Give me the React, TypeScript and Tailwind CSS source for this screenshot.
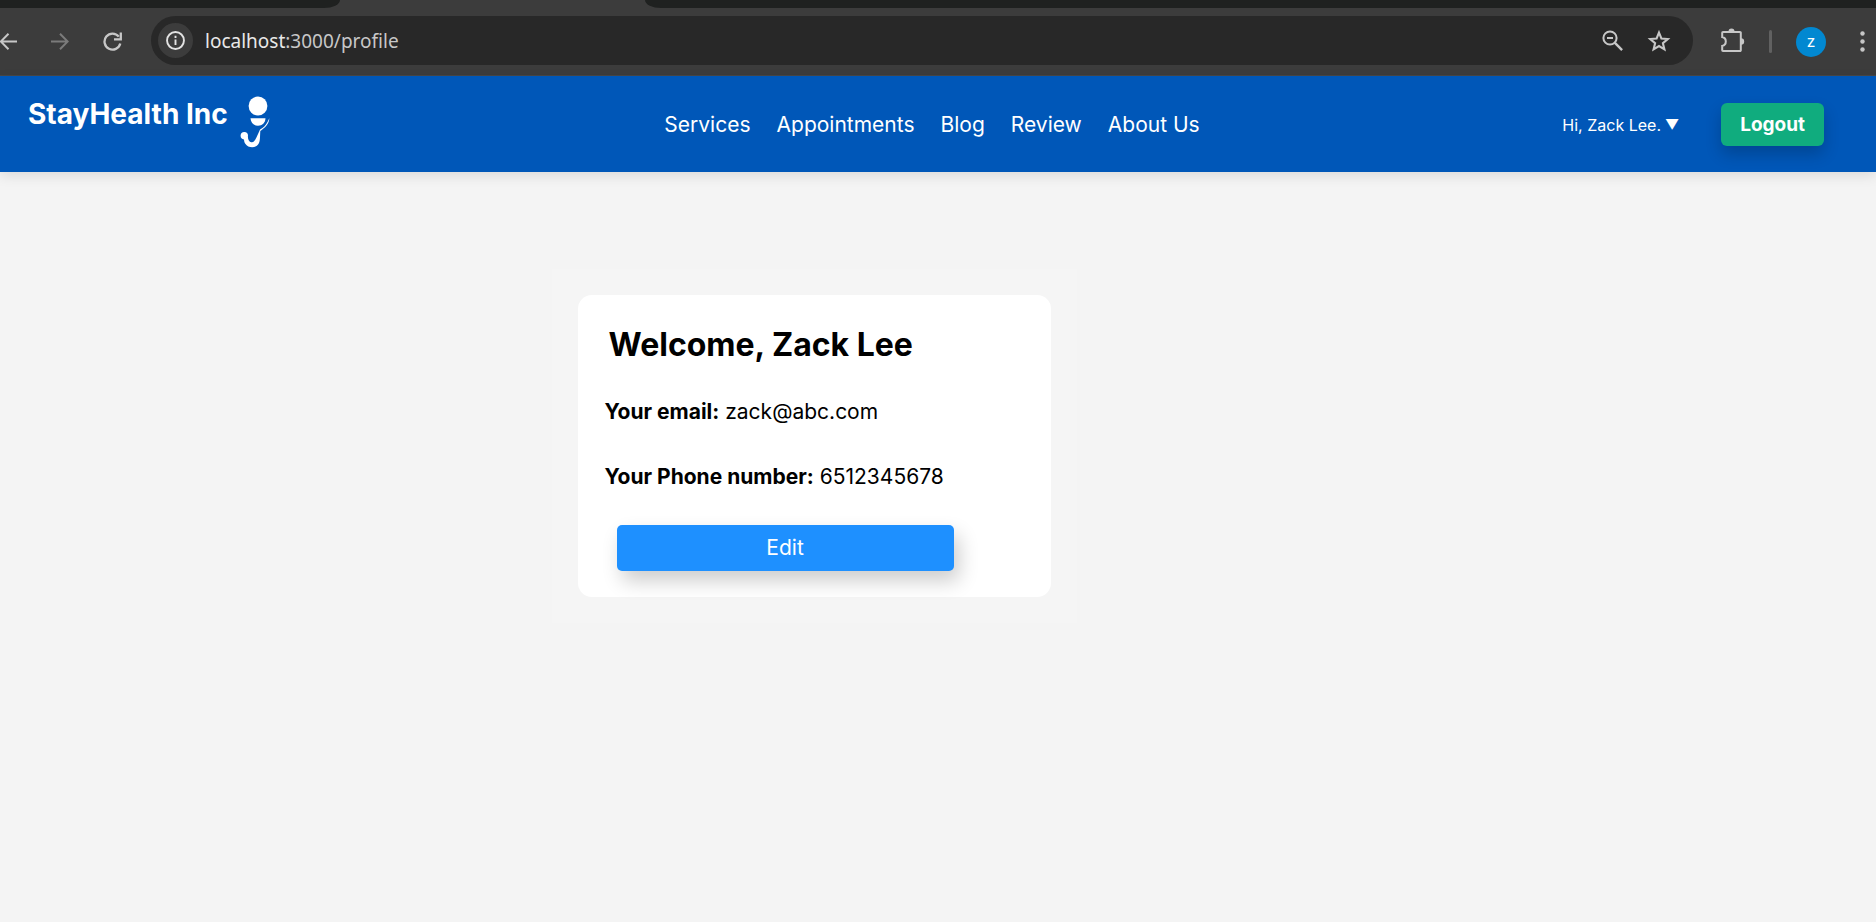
import React from "react";

const navLinks = ["Services", "Appointments", "Blog", "Review", "About Us"];

const pillButton = "flex h-[33px] w-8 shrink-0 items-center justify-center text-[#c7c7c7]";
const barButton = "mt-0.5 flex h-[33px] shrink-0 items-center";

function BrowserBar() {
  return (
    <div className="border-b border-[#474747] bg-[#3c3c3c]">
      <div className="flex h-2">
        <div className="w-[18.1%] rounded-br-[16px_8px] bg-[#1f2120]" />
        <div className="w-[16.3%]" />
        <div className="flex-1 rounded-bl-[16px_8px] bg-[#1f2120]" />
      </div>
      <div className="flex h-[67px] items-center pb-0.5">
        <button type="button" aria-label="Back" className={`${barButton} w-6 text-[#c7c7c7]`}>
          <svg width="17" height="17" viewBox="0 0 17 17" fill="none" stroke="currentColor" strokeWidth="2">
            <path d="M17 8.500H1M8.500 .8L.8 8.500l7.700 7.700" />
          </svg>
        </button>
        <button type="button" aria-label="Forward" className={`${barButton} ml-5 w-8 justify-center text-[#7b7b7b]`}>
          <svg width="18" height="17" viewBox="0 0 18 17" fill="none" stroke="currentColor" strokeWidth="2">
            <path d="M0 8.500h16.500M9 .8l7.700 7.700L9 16.200" />
          </svg>
        </button>
        <button type="button" aria-label="Reload" className={`${barButton} ml-[21px] w-8 justify-center text-[#c7c7c7]`}>
          <svg width="20" height="19" viewBox="0 0 20 19" fill="none" stroke="currentColor" strokeWidth="2.3">
            <path d="M17.300 11.500A8 8 0 1 1 15.800 4.600" />
            <path d="M17.800 .5v6.800H11" />
          </svg>
        </button>
        <div className="ml-[22px] flex h-[49px] flex-1 items-center rounded-full bg-[#282828] pl-[7px] pr-[18px]">
          <button
            type="button"
            aria-label="Site information"
            className="flex h-[35px] w-[35px] shrink-0 items-center justify-center rounded-full bg-[#3c3c3c] text-[#e3e3e3]"
          >
            <svg width="19" height="19" viewBox="0 0 20 20" fill="none" stroke="currentColor" strokeWidth="2">
              <circle cx="10" cy="10" r="8.900" />
              <path d="M10 9v5.800M10 5v2.300" />
            </svg>
          </button>
          <a href="#profile" className="ml-3 flex-1 font-['Noto_Sans',sans-serif] text-[19px] leading-7 text-[#c7c7c7]">
            <span className="text-[#e8e8e8]">localhost</span>:3000/profile
          </a>
          <button type="button" aria-label="Zoom" className={pillButton}>
            <svg width="21" height="21" viewBox="0 0 21 21" fill="none" stroke="currentColor" strokeWidth="2">
              <circle cx="8" cy="8" r="6.600" />
              <path d="M12.700 12.700l7.400 7.400" strokeWidth="2.400" />
              <path d="M5 8h6" />
            </svg>
          </button>
          <button type="button" aria-label="Bookmark this page" className={`${pillButton} ml-[15px]`}>
            <svg width="24" height="24" viewBox="0 0 24 24" fill="none" stroke="currentColor" strokeWidth="2.100">
              <path d="M12 3.600l2.400 5.900 6.400.5-4.900 4.200 1.500 6.200L12 17.100l-5.400 3.300 1.500-6.200L3.200 10l6.400-.5z" />
            </svg>
          </button>
        </div>
        <button type="button" aria-label="Extensions" className="ml-[23px] flex h-[33px] w-8 shrink-0 items-center justify-center text-[#c7c7c7]">
          <svg width="26" height="25" viewBox="0 0 26 25">
            <path
              d="M4 4h17a.8.8 0 0 1 .8.8v17.400a.8.8 0 0 1-.8.8H4a.8.8 0 0 1-.8-.8v-4.300c4.800-1 4.800-7.800 0-8.800V4.800A.8.8 0 0 1 4 4z"
              fill="none"
              stroke="currentColor"
              strokeWidth="2"
            />
            <path d="M9.500 3.500a3 3 0 0 1 6 0zM22 10.300a3.200 3.200 0 0 1 0 6.400z" fill="currentColor" />
          </svg>
        </button>
        <div className="ml-[21px] mt-0.5 h-[23px] w-[3px] shrink-0 rounded-full bg-[#616161]" />
        <button
          type="button"
          aria-label="Account"
          className="ml-6 mt-[3px] flex h-[30px] w-[30px] shrink-0 items-center justify-center rounded-full bg-[#0288d1] font-['Roboto',sans-serif] text-[16px] leading-5 text-white"
        >
          z
        </button>
        <button type="button" aria-label="Menu" className={`${barButton} ml-[23px] w-[27px] justify-center text-[#c7c7c7]`}>
          <svg width="5" height="21" viewBox="0 0 5 21" fill="currentColor">
            <circle cx="2.500" cy="2.500" r="2.200" />
            <circle cx="2.500" cy="10.500" r="2.200" />
            <circle cx="2.500" cy="18.500" r="2.200" />
          </svg>
        </button>
      </div>
    </div>
  );
}

function Logo() {
  return (
    <svg width="30" height="52" viewBox="0 0 30 52" fill="#fff" aria-hidden="true">
      <circle cx="18" cy="10" r="9.400" />
      <path d="M10.500 22.300h15c-.2 4.500-3.200 7.400-7.500 7.400s-7.300-2.900-7.500-7.400z" />
      <path d="M29.300 22.300c0 4.200-2.500 8.200-7.600 11.600l-1.400 1.200c-.4 6.500-.1 9.400-1.300 12-2.600 5.600-10.600 5.400-13.700.6-1-1.600-1.100-2.500-1.300-4.300A3.700 3.700 0 1 1 8 39.600c-.5 3.200 1 6.400 3.300 6.700 2.600.4 3.700-2.100 5-4.500l3.200-7c.2-1.300 1.300-1.900 2.600-2.500 3.200-1.800 5.200-5.300 7.200-10z" />
    </svg>
  );
}

function SiteHeader() {
  return (
    <header className="relative grid h-24 grid-cols-[1fr_auto_1fr] items-center bg-[#0057b8] pl-7 pr-[52px] text-white shadow-[0_4px_12px_rgba(0,0,0,0.1)]">
      <a href="#home" className="flex items-center gap-3 pb-1 text-[28px] font-bold leading-9">
        <span className="pb-4">StayHealth Inc</span>
        <Logo />
      </a>
      <nav className="flex gap-[26px] pl-3 pt-0.5 text-[21px] leading-7">
        {navLinks.map((label) => (
          <a key={label} href={`#${label.toLowerCase().replace(" ", "-")}`}>
            {label}
          </a>
        ))}
      </nav>
      <div className="flex items-center justify-end gap-[42px]">
        <button type="button" className="flex items-center gap-1 pt-0.5 text-[16px] leading-6">
          Hi, Zack Lee. <span className="text-[14px]">▼</span>
        </button>
        <button
          type="button"
          className="h-[43px] rounded-md bg-[#10ac7e] px-[19px] pt-0.5 text-[19px] font-bold leading-6 shadow-[0_8px_16px_rgba(0,0,0,0.2)]"
        >
          Logout
        </button>
      </div>
    </header>
  );
}

function ProfileCard() {
  return (
    <section className="bg-[#f5f5f5] p-[26px]">
      <div className="w-[473px] rounded-[14px] bg-white px-[27px] pb-[26px] pt-[30px]">
        <h1 className="pl-1 text-[32px] font-bold leading-10">Welcome, Zack Lee</h1>
        <p className="mt-8 text-[21px] leading-[30px]">
          <b>Your email:</b> zack@abc.com
        </p>
        <p className="mt-[35px] text-[21px] leading-[30px]">
          <b>Your Phone number:</b> 6512345678
        </p>
        <button
          type="button"
          className="ml-3 mt-[33px] block h-[46px] w-[337px] rounded-[5px] bg-[#1e90ff] text-[21px] leading-[30px] text-white shadow-[5px_10px_20px_rgba(0,0,0,0.2)]"
        >
          Edit
        </button>
      </div>
    </section>
  );
}

export default function App() {
  return (
    <div className="flex min-h-screen flex-col bg-[#f4f4f4] font-['Inter',sans-serif] text-black">
      <BrowserBar />
      <SiteHeader />
      <main className="flex flex-1 items-start pl-[29.4%] pt-[97px]">
        <ProfileCard />
      </main>
    </div>
  );
}
